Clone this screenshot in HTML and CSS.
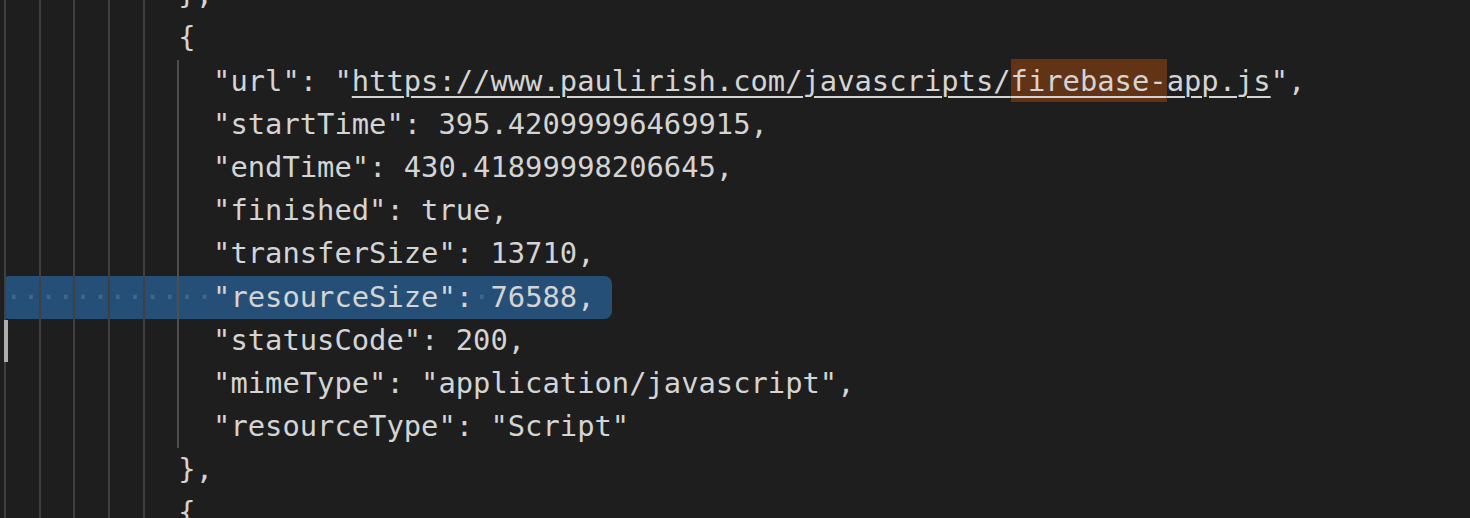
FILE: index.html
```html
<!DOCTYPE html>
<html lang="en">
<head>
<meta charset="utf-8">
<title>Editor</title>
<link rel="stylesheet" href="styles.css">
</head>
<body>
<div class="editor">
<div class="line g5">          },</div>
<div class="line g5">          {</div>
<div class="line g6">            "url": "<span class="link">https://www.paulirish.com/javascripts/<span class="match">firebase-</span>app.js</span>",</div>
<div class="line g6">            "startTime": 395.42099996469915,</div>
<div class="line g6">            "endTime": 430.41899998206645,</div>
<div class="line g6">            "finished": true,</div>
<div class="line g6">            "transferSize": 13710,</div>
<div class="line g6"><span class="sel"><span class="ws">············</span>"resourceSize":<span class="ws">·</span>76588,</span></div>
<div class="line g6"><span class="cursor"></span>            "statusCode": 200,</div>
<div class="line g6">            "mimeType": "application/javascript",</div>
<div class="line g6">            "resourceType": "Script"</div>
<div class="line g5">          },</div>
<div class="line g5">          {</div>
</div>
</body>
</html>
```

FILE: styles.css
```css
html, body {
  margin: 0;
  padding: 0;
  background: #1e1e1e;
  height: 518px;
  overflow: hidden;
}

.editor {
  margin-top: -26.8px;
  padding-left: 5px;
  font-family: "DejaVu Sans Mono", "Liberation Mono", monospace;
  font-size: 28.8px;
  line-height: 43.2px;
  color: #d4d4d4;
}

.line {
  position: relative;
  height: 43.2px;
  white-space: pre;
}

.line::before {
  content: "";
  position: absolute;
  left: -1px;
  top: 0;
  height: 100%;
  width: 141px;
  background: repeating-linear-gradient(to right, #404040 0 2px, transparent 2px 34.68px);
  z-index: 2;
  pointer-events: none;
}

.g6::after {
  content: "";
  position: absolute;
  left: 172.4px;
  top: 0;
  height: 100%;
  width: 2px;
  background: #4e4e4e;
  z-index: 2;
  pointer-events: none;
}

.sel {
  display: block;
  width: 35ch;
  height: 43.2px;
  background: #264f78;
  border-radius: 4px 8px 8px 4px;
}

.ws {
  color: #446789;
}

.link {
  text-decoration: underline;
  text-decoration-thickness: 2px;
  text-underline-offset: 5px;
}

.match {
  background: #623314;
  padding: 4.85px 0;
}

.cursor {
  position: absolute;
  left: -1px;
  top: 1px;
  width: 4px;
  height: 42px;
  background: #aeafad;
  z-index: 3;
}
```
